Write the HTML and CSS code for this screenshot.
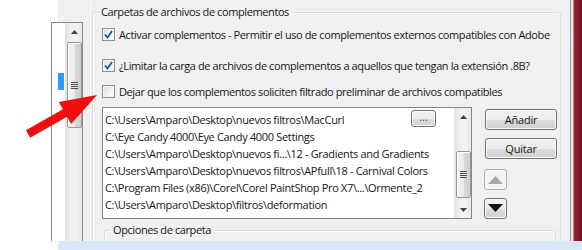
FILE: index.html
```html
<!DOCTYPE html>
<html lang="es">
<head>
<meta charset="utf-8">
<title>Preferencias - Complementos</title>
<link rel="stylesheet" href="styles.css">
</head>
<body>
<div class="screen">
  <div class="blank"></div>
  <div class="dialog">
    <div class="dlg-main">
      <div class="nav-col">
        <div class="nav-cap"></div>
        <div class="nav">
          <div class="nav-list"><div class="nav-sel"></div></div>
          <div class="vscroll nav-scroll">
            <div class="sb-btn"><svg width="7" height="4" viewBox="0 0 7 4"><path d="M0 4 L3.5 0 L7 4 Z" fill="#404040"/></svg></div>
            <div class="thumb nav-thumb"><span class="grip"></span></div>
          </div>
        </div>
      </div>
      <div class="content">
        <div class="group main-group">
          <span class="legend">Carpetas de archivos de complementos</span>
          <label class="check row1"><span class="box checked"><svg width="9" height="9" viewBox="0 0 9 9"><path d="M1 4.5 L3.5 7.5 L8 1" fill="none" stroke="#2a4f9a" stroke-width="1.8"/></svg></span>Activar complementos - Permitir el uso de complementos externos compatibles con Adobe</label>
          <label class="check row2"><span class="box checked"><svg width="9" height="9" viewBox="0 0 9 9"><path d="M1 4.5 L3.5 7.5 L8 1" fill="none" stroke="#2a4f9a" stroke-width="1.8"/></svg></span>¿Limitar la carga de archivos de complementos a aquellos que tengan la extensión .8B?</label>
          <label class="check row3"><span class="box"></span>Dejar que los complementos soliciten filtrado preliminar de archivos compatibles</label>
          <div class="files">
            <div class="listbox">
              <ul class="paths">
                <li>C:\Users\Amparo\Desktop\nuevos filtros\MacCurl</li>
                <li>C:\Eye Candy 4000\Eye Candy 4000 Settings</li>
                <li>C:\Users\Amparo\Desktop\nuevos fi...\12 - Gradients and Gradients</li>
                <li>C:\Users\Amparo\Desktop\nuevos filtros\APfull\18 - Carnival Colors</li>
                <li>C:\Program Files (x86)\Corel\Corel PaintShop Pro X7\...\Ormente_2</li>
                <li>C:\Users\Amparo\Desktop\filtros\deformation</li>
              </ul>
              <button class="dots">...</button>
              <div class="vscroll list-scroll">
                <div class="sb-btn"><svg width="7" height="4" viewBox="0 0 7 4"><path d="M0 4 L3.5 0 L7 4 Z" fill="#404040"/></svg></div>
                <div class="track-space top"></div>
                <div class="thumb list-thumb"><span class="grip"></span></div>
                <div class="track-space bottom"></div>
                <div class="sb-btn"><svg width="7" height="4" viewBox="0 0 7 4"><path d="M0 0 L3.5 4 L7 0 Z" fill="#404040"/></svg></div>
              </div>
            </div>
            <div class="side">
              <button class="btn wide add">Añadir</button>
              <button class="btn wide remove">Quitar</button>
              <button class="btn small up" disabled><svg width="15" height="8" viewBox="0 0 15 8"><path d="M0 8 L7.5 0 L15 8 Z" fill="#a8a8a8"/></svg></button>
              <button class="btn small down"><svg width="15" height="9" viewBox="0 0 15 9"><path d="M0 0 L7.5 8 L15 0 Z" fill="#111"/></svg></button>
            </div>
          </div>
          <div class="group sub-group">
            <span class="legend">Opciones de carpeta</span>
          </div>
        </div>
      </div>
      <div class="edge"></div>
    </div>
    <div class="status"></div>
  </div>
  <svg class="arrow" width="582" height="250" viewBox="0 0 582 250">
    <polygon points="25.9,130.3 62.9,109.3 58.8,102 97,95 71.2,124 67.1,116.7 30.1,137.7" fill="#f00d0d"/>
  </svg>
</div>
</body>
</html>
```

FILE: styles.css
```css
* { box-sizing: border-box; }

html, body {
  margin: 0;
  padding: 0;
  background: #ffffff;
}

body {
  font-family: "Open Sans", "Noto Sans", sans-serif;
  font-size: 11px;
  letter-spacing: -0.4px;
  color: #161616;
}

.screen {
  position: relative;
  width: 582px;
  height: 250px;
  display: flex;
  overflow: hidden;
  background: #ffffff;
}

.blank {
  width: 51px;
  flex: none;
  background: #ffffff;
}

.dialog {
  flex: 1;
  display: flex;
  flex-direction: column;
}

.dlg-main {
  flex: 1;
  display: flex;
  background: #f0f0f0;
  min-height: 0;
}

/* left navigation list (cropped) */
.nav-col {
  width: 39px;
  flex: none;
  display: flex;
  flex-direction: column;
}

.nav-cap {
  height: 22px;
  flex: none;
  background: linear-gradient(90deg, #ffffff 0 7px, #f0f0f0 7px);
}

.nav {
  width: 32px;
  flex: 1;
  display: flex;
  background: #ffffff;
  border: 1px solid #828790;
  border-bottom: none;
}

.nav-list {
  width: 13px;
  flex: none;
}

.nav-sel {
  margin: 50px 0 0 6px;
  width: 6px;
  height: 17px;
  background: #3399ff;
}

.vscroll {
  width: 17px;
  flex: none;
  display: flex;
  flex-direction: column;
  align-items: center;
  background: linear-gradient(90deg, #e3e3e3 0%, #efefef 30%, #f3f3f3 60%, #e8e8e8 100%);
  border-left: 1px solid #e4e4e4;
}

.sb-btn {
  width: 100%;
  height: 17px;
  flex: none;
  display: flex;
  align-items: center;
  justify-content: center;
}

.thumb {
  width: 15px;
  border: 1px solid #979797;
  border-radius: 2px;
  background: linear-gradient(90deg, #f2f2f2 0%, #ebebeb 50%, #d8d8d8 51%, #cfcfcf 100%);
  display: flex;
  align-items: center;
  justify-content: center;
  box-shadow: inset 1px 1px 0 #ffffff;
}

.grip {
  width: 7px;
  height: 7px;
  background: repeating-linear-gradient(180deg, #4d4d4d 0 1px, #e8e8e8 1px 2px);
}

.nav-thumb {
  margin-top: 2px;
  height: 86px;
}

/* main content */
.content {
  flex: 1;
  display: flex;
  flex-direction: column;
  border-left: 1px solid #fafafa;
  padding-left: 1px;
}

.group {
  position: relative;
  border: 1px solid #d5dfe5;
  border-bottom: none;
  border-radius: 3px 3px 0 0;
  box-shadow: inset 1px 1px 0 #ffffff;
}

.legend {
  position: absolute;
  top: -9px;
  left: 6px;
  padding: 0 2px;
  background: #f0f0f0;
  line-height: 16px;
  white-space: nowrap;
}

.main-group {
  margin-top: 12px;
  width: 469px;
  flex: 1;
  display: flex;
  flex-direction: column;
  padding: 13px 3px 0 9px;
}

.check {
  display: flex;
  align-items: center;
  height: 17px;
  white-space: nowrap;
}

.row2 { margin-top: 14px; }
.row3 { margin-top: 9px; }

.box {
  width: 13px;
  height: 13px;
  flex: none;
  margin-right: 4px;
  border: 1px solid #8e8f8f;
  background: linear-gradient(135deg, #dcdcdc 0%, #f4f4f4 60%, #ffffff 100%);
  box-shadow: inset 0 0 0 1px #f4f4f4;
  display: flex;
  align-items: center;
  justify-content: center;
}

.box.checked {
  background: linear-gradient(135deg, #d8dde2 0%, #f4f6f8 60%, #ffffff 100%);
}

.files {
  margin-top: 7px;
  display: flex;
}

.listbox {
  position: relative;
  width: 370px;
  height: 112px;
  border: 1px solid #828790;
  background: #ffffff;
  display: flex;
}

.paths {
  list-style: none;
  margin: 0;
  padding: 3px 0 0 2px;
  flex: 1;
  letter-spacing: -0.33px;
}

.paths li {
  height: 17px;
  line-height: 17px;
  white-space: nowrap;
}

.dots {
  position: absolute;
  left: 308px;
  top: 2px;
  width: 25px;
  height: 17px;
  padding: 0 0 4px;
  font-family: inherit;
  font-size: 11px;
  letter-spacing: 0;
  line-height: 10px;
  color: #7a1f57;
  border: 1px solid #707070;
  border-radius: 3px;
  background: linear-gradient(180deg, #f2f2f2 0%, #ebebeb 50%, #dddddd 51%, #cfcfcf 100%);
  box-shadow: inset 0 0 0 1px #fcfcfc;
}

.list-scroll .track-space.top { height: 26px; flex: none; }
.list-scroll .track-space.bottom { flex: 1; }

.list-thumb {
  height: 47px;
  flex: none;
}

.side {
  margin-left: 12px;
  display: flex;
  flex-direction: column;
  align-items: flex-start;
}

.btn {
  font-family: inherit;
  font-size: 11px;
  letter-spacing: -0.2px;
  color: #161616;
  border: 1px solid #707070;
  border-radius: 3px;
  background: linear-gradient(180deg, #f2f2f2 0%, #ebebeb 50%, #dddddd 51%, #cfcfcf 100%);
  box-shadow: inset 0 0 0 1px #fcfcfc;
  padding: 0;
  display: flex;
  align-items: center;
  justify-content: center;
}

.btn.wide {
  width: 72px;
  height: 21px;
  margin-left: 1px;
}

.add { margin-top: 2px; }
.remove { margin-top: 8px; }

.btn.small {
  width: 23px;
  height: 21px;
}

.up {
  margin-top: 10px;
  border-color: #adb2b5;
  background: #f4f4f4;
  box-shadow: none;
}

.down { margin-top: 8px; }

.sub-group {
  margin: 11px 0 0 2px;
  width: 452px;
  flex: 1;
}

.edge {
  width: 12px;
  flex: none;
  border-left: 1px solid #a0a0a0;
  background: linear-gradient(90deg, #e8e8e8 0 2px, #9a2436 3px, #6e1020 100%);
}

.status {
  height: 9px;
  margin-left: 7px;
  background: #dbe7f6;
  flex: none;
}

.arrow {
  position: absolute;
  left: 0;
  top: 0;
  pointer-events: none;
}
```
